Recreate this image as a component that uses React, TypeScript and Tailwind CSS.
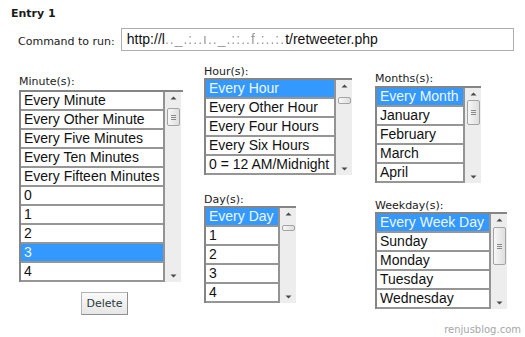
import React from "react";

type LBProps = {
  items: string[];
  sel: number;
  rowCls: string;
  thumbCls: string;
  grip?: boolean;
};

function UpArrow() {
  return (
    <svg width="7" height="4" viewBox="0 0 7 4">
      <path d="M0.5 3.5 L3.5 0.5 L6.5 3.5 Z" fill="#4a4a4a" />
    </svg>
  );
}

function DownArrow() {
  return (
    <svg width="7" height="4" viewBox="0 0 7 4">
      <path d="M0.5 0.5 L6.5 0.5 L3.5 3.5 Z" fill="#4a4a4a" />
    </svg>
  );
}

function ListBox({ items, sel, rowCls, thumbCls, grip }: LBProps) {
  return (
    <div className="flex border-t-2 border-l-2 border-[#858585]">
      <div className={`flex flex-col border-r-2 border-[#939393] ${rowCls}`}>
        {items.map((it, i) => (
          <div
            key={i}
            className={`h-[19px] border-b-2 border-[#969696] pl-[3px] text-[14px] leading-[17px] whitespace-nowrap overflow-hidden ${
              i === sel ? "bg-[#3399ff] text-[#eef6ff]" : "bg-white text-[#111]"
            }`}
            style={{ fontFamily: '"Liberation Sans", Arial, sans-serif' }}
          >
            {it}
          </div>
        ))}
      </div>
      <div className="w-[16px] bg-[#ededed] flex flex-col items-center">
        <div className="h-[12px] flex items-center justify-center">
          <UpArrow />
        </div>
        <div
          className={`w-[13px] rounded-[2px] border border-[#a3a3a3] bg-gradient-to-r from-[#f7f7f7] to-[#dedede] flex flex-col items-center justify-center gap-[1px] ${thumbCls}`}
        >
          {grip && (
            <>
              <div className="w-[5px] h-[1px] bg-[#8a8a8a]" />
              <div className="w-[5px] h-[1px] bg-[#8a8a8a]" />
              <div className="w-[5px] h-[1px] bg-[#8a8a8a]" />
            </>
          )}
        </div>
        <div className="flex-1" />
        <div className="h-[12px] flex items-center justify-center">
          <DownArrow />
        </div>
      </div>
    </div>
  );
}

export default function App() {
  return (
    <div
      className="w-[525px] h-[337px] bg-white relative overflow-hidden text-[#1a1a1a]"
      style={{ fontFamily: '"DejaVu Sans", Verdana, sans-serif' }}
    >
      <div className="pl-[11px] pt-[7px] text-[11px] leading-[13px] font-bold">Entry 1</div>

      <div className="flex items-center mt-[8px] pl-[18px]">
        <span className="text-[11px] leading-[13px] mr-[6px] mt-[4px]">Command to run:</span>
        <div
          className="w-[393px] h-[23px] border border-[#aeaeae] bg-white flex items-center pl-[5px] text-[14px] text-[#111] whitespace-nowrap overflow-hidden"
          style={{ fontFamily: '"Liberation Sans", Arial, sans-serif' }}
        >
          <span>http://l</span>
          <span className="text-[#9a9a9a] blur-[0.7px] tracking-[1px]">.._.:..ı.._.::..f.:..:.</span>
          <span>t/retweeter.php</span>
        </div>
      </div>

      <div className="flex pl-[19px] gap-[21px] items-start">
        <div className="flex flex-col mt-[24px] w-[164px]">
          <div className="text-[11px] leading-[13px] mb-[2px]">Minute(s):</div>
          <ListBox
            items={[
              "Every Minute",
              "Every Other Minute",
              "Every Five Minutes",
              "Every Ten Minutes",
              "Every Fifteen Minutes",
              "0",
              "1",
              "2",
              "3",
              "4",
            ]}
            sel={8}
            rowCls="w-[144px]"
            thumbCls="mt-[4px] h-[18px]"
            grip
          />
          <div className="mt-[8px] ml-[62px]">
            <button className="w-[47px] h-[23px] border border-[#b4b4b4] border-r-[#8f8f8f] border-b-[#8f8f8f] bg-gradient-to-b from-[#fafafa] to-[#e6e6e6] text-[11px] text-[#2b3a3a] leading-[13px]">
              Delete
            </button>
          </div>
        </div>

        <div className="flex flex-col mt-[14px] w-[150px] items-start">
          <div className="text-[11px] leading-[13px]">Hour(s):</div>
          <ListBox
            items={["Every Hour", "Every Other Hour", "Every Four Hours", "Every Six Hours", "0 = 12 AM/Midnight"]}
            sel={0}
            rowCls="w-[130px]"
            thumbCls="mt-[5px] h-[7px]"
          />
          <div className="text-[11px] leading-[13px] mt-[18px]">Day(s):</div>
          <ListBox
            items={["Every Day", "1", "2", "3", "4"]}
            sel={0}
            rowCls="w-[74px]"
            thumbCls="mt-[5px] h-[6px]"
          />
        </div>

        <div className="flex flex-col mt-[21px] items-start">
          <div className="text-[11px] leading-[13px] mb-[1px]">Months(s):</div>
          <ListBox
            items={["Every Month", "January", "February", "March", "April"]}
            sel={0}
            rowCls="w-[88px]"
            thumbCls="mt-[0px] h-[25px]"
            grip
          />
          <div className="text-[11px] leading-[13px] mt-[16px]">Weekday(s):</div>
          <ListBox
            items={["Every Week Day", "Sunday", "Monday", "Tuesday", "Wednesday"]}
            sel={0}
            rowCls="w-[114px]"
            thumbCls="mt-[1px] h-[38px]"
            grip
          />
        </div>
      </div>

      <div className="absolute right-[4px] bottom-[1px] text-[10px] leading-[12px] text-[#a6a6a6]">
        renjusblog.com
      </div>
    </div>
  );
}
